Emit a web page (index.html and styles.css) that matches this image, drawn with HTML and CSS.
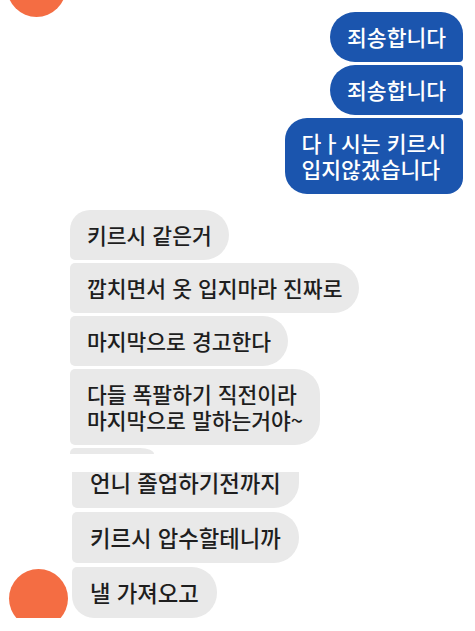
FILE: index.html
```html
<!DOCTYPE html>
<html lang="ko">
<head>
    <meta charset="UTF-8">
    <meta name="viewport" content="width=device-width, initial-scale=1.0">
    <title>메시지</title>
    <link rel="stylesheet" href="styles.css">
</head>
<body>
    <div class="chat">
        <div class="avatar avatar-top"></div>

        <div class="group-out">
            <div class="bubble out first">죄송합니다</div>
            <div class="bubble out">죄송합니다</div>
            <div class="bubble out last">다ㅏ시는 키르시<br>입지않겠습니다</div>
        </div>

        <div class="group-in">
            <div class="avatar-col">
                <div class="avatar avatar-bottom"></div>
            </div>
            <div class="bubbles-in">
                <div class="bubble in first">키르시 같은거</div>
                <div class="bubble in">깝치면서 옷 입지마라 진짜로</div>
                <div class="bubble in">마지막으로 경고한다</div>
                <div class="bubble in">다들 폭팔하기 직전이라<br>마지막으로 말하는거야~</div>
                <div class="splice"></div>
                <div class="lower">
                    <div class="bubble in cut"><span class="cut-text">언니 졸업하기전까지</span></div>
                    <div class="bubble in">키르시 압수할테니까</div>
                    <div class="bubble in last">낼 가져오고</div>
                </div>
            </div>
        </div>
    </div>
</body>
</html>
```

FILE: styles.css
```css
body {
    margin: 0;
    background: #fff;
    font-family: "Noto Sans CJK KR", "Noto Sans", sans-serif;
    overflow: hidden;
}
.chat {
    padding: 0 12px 0 0;
}
.avatar {
    width: 59px;
    height: 59px;
    border-radius: 50%;
    background-color: #f46d43;
}
.avatar-top {
    margin: -42px 0 0 7px;
}
.bubble {
    font-size: 21.5px;
    font-weight: 500;
    line-height: 26px;
    padding: 12px 17px;
    white-space: nowrap;
}
.group-out {
    display: flex;
    flex-direction: column;
    align-items: flex-end;
    gap: 3px;
    margin-top: -5px;
}
.out {
    background-color: #1b55ae;
    color: #fff;
    border-radius: 25px 4px 4px 25px;
}
.out.first {
    border-top-right-radius: 22px;
}
.out.last {
    border-radius: 22px 4px 16px 22px;
}
.group-in {
    display: flex;
    margin-top: 16px;
}
.avatar-col {
    display: flex;
    align-items: flex-end;
    margin-left: 9px;
    margin-bottom: -10px;
}
.bubbles-in {
    display: flex;
    flex-direction: column;
    align-items: flex-start;
    gap: 3px;
    margin-left: 2px;
}
.in {
    background-color: #e9e9e9;
    color: #1e1e1e;
    border-radius: 5px 25px 25px 5px;
}
.in.first {
    border-top-left-radius: 20px;
}
.in.last {
    border-bottom-left-radius: 22px;
}
.splice {
    width: 84px;
    height: 6px;
    background-color: #e9e9e9;
    border-radius: 5px 14px 0 0 / 5px 6px 0 0;
    margin-bottom: 15px;
}
/* bottom part of the capture is scaled a little larger */
.lower {
    display: flex;
    flex-direction: column;
    align-items: flex-start;
    gap: 4px;
    margin-left: 2px;
}
.lower .bubble {
    font-size: 22.3px;
    padding: 12.5px 18px;
}
.lower .cut {
    padding-top: 0;
    overflow: hidden;
    border-top-left-radius: 0;
    border-top-right-radius: 0;
}
.cut-text {
    display: block;
    margin-top: -3px;
}
```
